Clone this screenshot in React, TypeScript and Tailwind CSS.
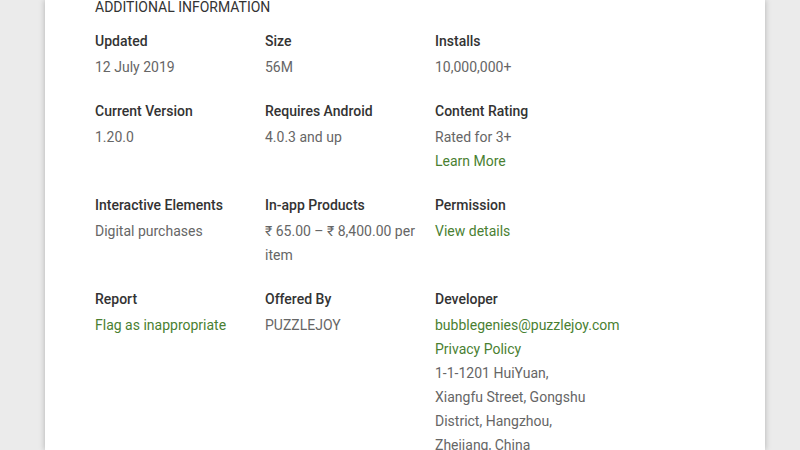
const font = { fontFamily: 'Roboto, "Liberation Sans", sans-serif' };

type Cell = {
  label: string;
  values: { text: string; link?: boolean }[];
};

const rows: Cell[][] = [
  [
    { label: 'Updated', values: [{ text: '12 July 2019' }] },
    { label: 'Size', values: [{ text: '56M' }] },
    { label: 'Installs', values: [{ text: '10,000,000+' }] },
  ],
  [
    { label: 'Current Version', values: [{ text: '1.20.0' }] },
    { label: 'Requires Android', values: [{ text: '4.0.3 and up' }] },
    {
      label: 'Content Rating',
      values: [{ text: 'Rated for 3+' }, { text: 'Learn More', link: true }],
    },
  ],
  [
    { label: 'Interactive Elements', values: [{ text: 'Digital purchases' }] },
    { label: 'In-app Products', values: [{ text: '₹ 65.00 – ₹ 8,400.00 per item' }] },
    { label: 'Permission', values: [{ text: 'View details', link: true }] },
  ],
  [
    { label: 'Report', values: [{ text: 'Flag as inappropriate', link: true }] },
    { label: 'Offered By', values: [{ text: 'PUZZLEJOY' }] },
    {
      label: 'Developer',
      values: [
        { text: 'bubblegenies@puzzlejoy.com', link: true },
        { text: 'Privacy Policy', link: true },
        { text: '1-1-1201 HuiYuan, Xiangfu Street, Gongshu District, Hangzhou, Zhejiang, China' },
      ],
    },
  ],
];

export default function App() {
  return (
    <div className="h-[450px] w-full overflow-hidden bg-[#ebebeb]" style={font}>
      <div className="ml-[45px] h-full w-[720px] bg-white pl-[50px] shadow-[0_0_6px_rgba(0,0,0,0.25)]">
        <h2 className="text-[14px] leading-[14px] font-normal text-[#333333] uppercase">
          Additional Information
        </h2>
        <div className="mt-[15px] flex flex-col gap-5">
          {rows.map((row, i) => (
            <div key={i} className="flex">
              {row.map((cell) => (
                <div key={cell.label} className="w-[170px] pr-[12px]">
                  <div className="text-[14px] leading-6 font-medium text-[#333333]">{cell.label}</div>
                  <div className="mt-[2px]">
                    {cell.values.map((v) => (
                      <div
                        key={v.text}
                        className={
                          v.link
                            ? 'text-[14px] leading-6 text-[#4a7f32]'
                            : 'text-[14px] leading-6 text-[#666666]'
                        }
                      >
                        {v.text}
                      </div>
                    ))}
                  </div>
                </div>
              ))}
            </div>
          ))}
        </div>
      </div>
    </div>
  );
}
